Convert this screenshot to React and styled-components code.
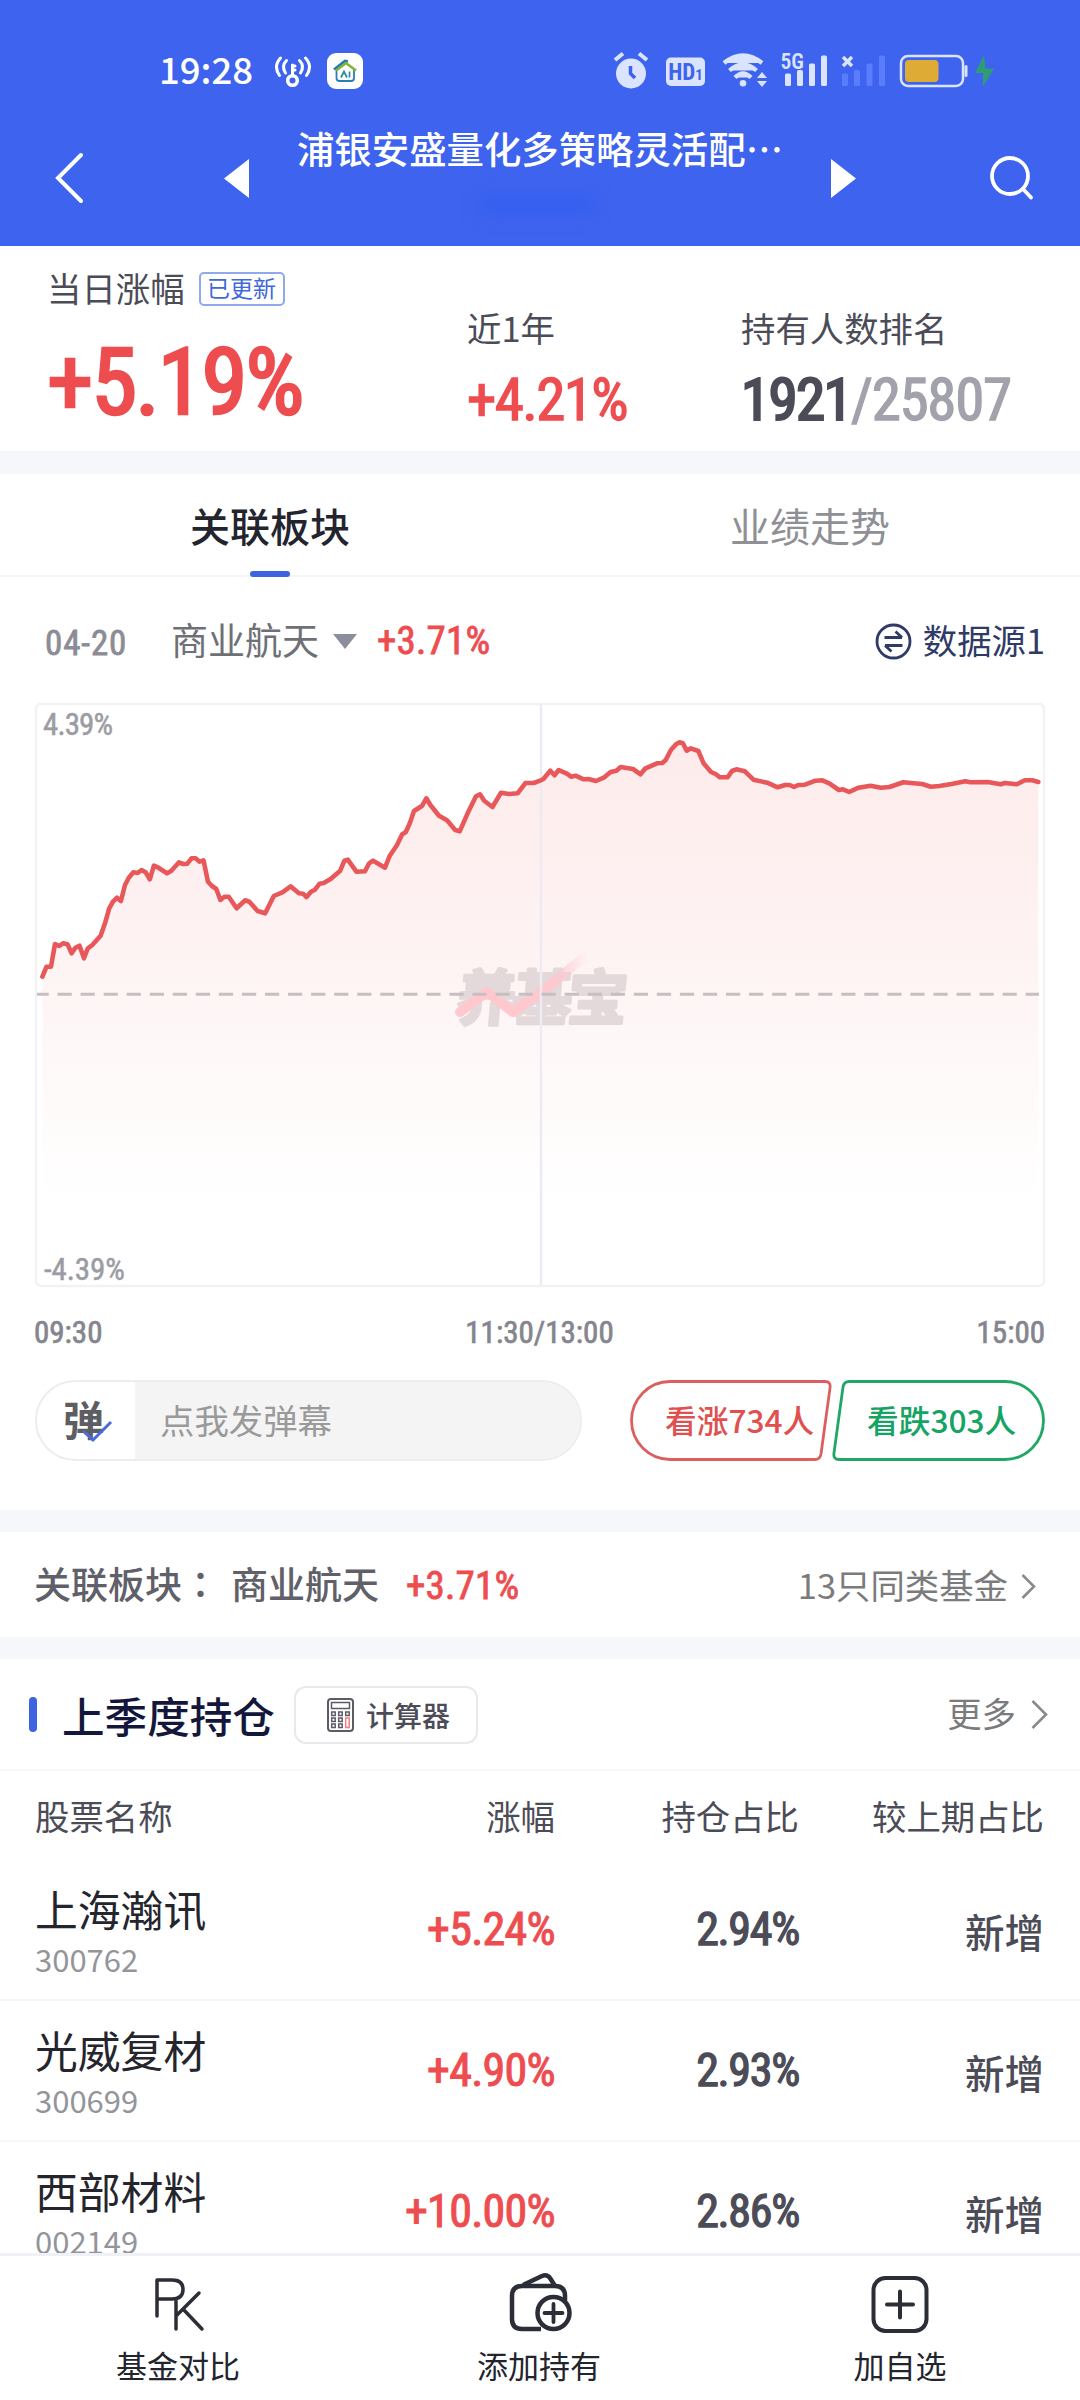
import React from 'react';
import styled, { createGlobalStyle } from 'styled-components';

const GlobalStyle = createGlobalStyle`
  body {
    margin: 0;
    background: #fff;
    font-family: "Noto Sans CJK SC", sans-serif;
  }
  * { box-sizing: border-box; }
`

const RED = '#ee4d50';
const GREEN = '#15a463';

// Base
const Screen = styled.div`
  width: 1080px;
  height: 2400px;
  display: flex;
  flex-direction: column;
  overflow: hidden;
  color: #4b4c57;
`

// the padding lifts CJK glyphs to the middle of their line
const Text = styled.span`
  font-size: ${p => p.$size || 34.4}px;
  font-weight: ${p => p.$weight || 400};
  color: ${p => p.$color || 'inherit'};
  line-height: 1;
  padding-bottom: 0.11em;
  white-space: nowrap;
`

const Colon = styled(Text)`
  font-family: "Noto Sans CJK TC", sans-serif;
  margin-right: 12px;
`

// regular weight plus a thin stroke gives a medium weight
const Num = styled.span`
  font-family: "Roboto Condensed", Roboto, "Noto Sans CJK SC", sans-serif;
  font-stretch: 75%;
  font-size: ${p => p.$size}px;
  font-weight: 400;
  -webkit-text-stroke: ${p => p.$stroke || 0.022}em currentColor;
  letter-spacing: ${p => p.$gap || 0}px;
  color: ${p => p.$color || RED};
  line-height: 1;
  white-space: nowrap;
`

const Gap = styled.div`
  flex: none;
  height: ${p => p.$h}px;
  background: #f5f7fb;
`

// Header
const Header = styled.header`
  flex: none;
  height: 246px;
  background: #3e63ee;
  color: #fff;
`

const StatusBar = styled.div`
  display: flex;
  align-items: center;
  justify-content: space-between;
  height: 142px;
  padding: 0 85px 0 159px;
`

const StatusGroup = styled.div`
  display: flex;
  align-items: center;

  svg { margin-left: ${p => p.$gap}px; }
`

const TitleBar = styled.div`
  display: flex;
  justify-content: space-between;
  height: 104px;
  padding: 0 46px 0 54px;
`

const TitleIcon = styled.svg`
  flex: none;
  margin-top: ${p => p.$top || 9}px;
`

const TitleMid = styled.div`
  display: flex;
  justify-content: space-between;
  width: 640px;
  padding-left: 6px;
`

const TitleText = styled.div`
  display: flex;
  flex-direction: column;
  align-items: center;
  margin-top: -12px;
`

const Smudge = styled.div`
  width: 120px;
  height: 22px;
  margin-top: 22px;
  margin-left: -6px;
  border-radius: 12px;
  background: #365ff0;
  filter: blur(8px);
`

// Summary
const Summary = styled.section`
  flex: none;
  display: grid;
  grid-template-columns: 420px 274px 1fr;
  height: 205px;
  padding-left: 47px;
`

const Metric = styled.div`
  display: flex;
  flex-direction: column;
  gap: ${p => p.$gap}px;
  padding-top: ${p => p.$top}px;
`

const MetricLabel = styled.div`
  display: flex;
  align-items: center;
  gap: 14px;
  height: 38px;
`

const Badge = styled.div`
  display: flex;
  align-items: center;
  justify-content: center;
  width: 86px;
  height: 34px;
  border: 2px solid #8fa9ee;
  border-radius: 5px;
  color: #3f68d8;
`

// Tabs
const Tabs = styled.nav`
  flex: none;
  display: grid;
  grid-template-columns: 1fr 1fr;
  height: 103px;
  border-bottom: 2px solid #f5f5f6;
`

const Tab = styled.div`
  position: relative;
  display: flex;
  align-items: center;
  justify-content: center;
  padding-top: 6px;

  &::after {
    content: '';
    display: ${p => p.$active ? 'block' : 'none'};
    position: absolute;
    bottom: -2px;
    left: 250px;
    width: 40px;
    height: 6px;
    border-radius: 3px;
    background: #3e63df;
  }
`

// Chart
const FilterRow = styled.div`
  flex: none;
  display: flex;
  align-items: center;
  height: 126px;
  padding: 3px 35px 0 45px;
`

const DateCell = styled.div`
  display: flex;
  width: 126px;
  padding-top: 3px;
`

const Caret = styled.div`
  margin: 0 20px 0 14px;
  border: 12.5px solid transparent;
  border-top: 15px solid #8d8e9b;
  border-bottom: 0;
`

const Source = styled.div`
  display: flex;
  align-items: center;
  gap: 11px;
  margin-left: auto;
  color: #2f3a66;
`

const ChartBox = styled.div`
  flex: none;
  height: 583px;
  margin: 0 35px;

  svg {
    display: block;
    overflow: visible;
  }
`

const Axis = styled.div`
  flex: none;
  display: grid;
  grid-template-columns: 1fr auto 1fr;
  align-items: center;
  height: 94px;
  padding: 0 35px 2px 34px;

  & > :last-child { text-align: right; }
`

const ActionRow = styled.div`
  flex: none;
  display: flex;
  justify-content: space-between;
  height: 130px;
  padding: 0 35px 0 35px;
`

const Danmu = styled.div`
  display: flex;
  width: 547px;
  height: 81px;
  border: 2px solid #ededed;
  border-radius: 41px;
  overflow: hidden;
`

const DanmuToggle = styled.div`
  position: relative;
  display: flex;
  align-items: center;
  width: 98px;
  padding-left: 26px;

  svg {
    position: absolute;
    left: 43px;
    top: 36px;
  }
`

const DanmuInput = styled.div`
  flex: 1;
  display: flex;
  align-items: center;
  padding: 2px 0 0 25px;
  background: #f4f4f4;
`

const Votes = styled.div`
  display: flex;
`

const Vote = styled.div`
  position: relative;
  display: flex;
  align-items: center;
  width: ${p => p.$w}px;
  height: 81px;
  padding-top: 2px;
  padding-left: ${p => p.$pad}px;
  color: ${p => p.$color};

  svg {
    position: absolute;
    inset: 0;
  }
`

// Sector
const SectorRow = styled.div`
  flex: none;
  display: flex;
  align-items: center;
  height: 105px;
  padding: 3px 44px 0 34px;

  ${Num} { margin-left: 27px; }
  svg { margin-left: 13px; }
`

const Push = styled.div`
  display: flex;
  align-items: center;
  margin-left: auto;
`

// Holdings
const HoldHead = styled.div`
  flex: none;
  display: flex;
  align-items: center;
  height: 112px;
  padding: 1px 32px 0 29px;
  border-bottom: 2px solid #f8f8f9;

  ${Push} svg { margin-left: 15px; }
`

const HoldTitle = styled.div`
  display: flex;
  padding-top: 6px;
`

const Bar = styled.div`
  width: 8px;
  height: 35px;
  margin-right: 25px;
  border-radius: 4px;
  background: #3e63df;
`

const CalcButton = styled.div`
  display: flex;
  align-items: center;
  gap: 12px;
  width: 184px;
  height: 58px;
  margin-left: 19px;
  padding-left: 31px;
  border: 2px solid #e9e9eb;
  border-radius: 12px;

  ${Text} { margin-top: 4px; }
`

const Table = styled.div`
  flex: 1;
  min-height: 0;
  overflow: hidden;
`

const Row = styled.div`
  display: grid;
  grid-template-columns: 300px 220px 244px 245px;
  align-items: center;
  height: ${p => p.$head ? 89 : 141}px;
  padding: ${p => p.$head ? 4 : 0}px 36px 0 35px;
  border-bottom: ${p => p.$head ? 0 : 2}px solid #f7f7f8;
`

const Cell = styled.div`
  display: flex;
  justify-content: flex-end;
  padding-top: ${p => p.$top || 0}px;
  padding-bottom: ${p => p.$bottom || 0}px;
`

const Stock = styled.div`
  display: flex;
  flex-direction: column;
  gap: 9px;
  padding-top: 5px;
`

// Bottom bar
const BottomBar = styled.footer`
  flex: none;
  display: grid;
  grid-template-columns: repeat(3, 361px);
  justify-content: center;
  height: 147px;
  padding-right: 2px;
  border-top: 3px solid #f0f1f7;
`

const BottomItem = styled.div`
  display: flex;
  flex-direction: column;
  align-items: center;
  gap: 12px;
  padding-top: 15px;
  color: #22242e;
`

// Data
const points = '6.4,273.7 10.5,263.7 15,263.7 19,241 23.2,243 27,240.3 31.5,241.3 35.6,250.3 39.4,244.7 43.5,242.7 48,255.3 51.8,245.3 56.3,242 64.6,232.7 69,220.3 73.2,205.3 77,198.7 81,194.7 84.9,198 89,182 92.8,174.7 97.3,169.3 101.7,170 105.5,167 109.7,169.3 113.8,176.3 117.9,162.7 122.4,164.7 131,170.3 135.1,168 143,159.3 147.2,161 151.3,160.7 155.5,155.3 159.6,155.3 163.7,158.7 167.5,157.3 172,178.7 176,183 180.3,186 184.4,197 188.5,193.7 192.7,193.7 200.6,205.3 209.2,197.3 213.3,198.7 221.6,208 229.2,210.3 237.8,193 246.4,189.3 254.6,183.3 262.9,190.3 267,190.7 270.5,194 275,188.7 279,186.7 283.6,180.7 287.7,180 294.6,176 304.2,167.7 308.4,157.7 311.8,156.7 320.4,168.7 329,168.3 333.1,160.3 337,157.7 341,160 349,164.7 353.8,152.7 361,142 366.2,131.3 369.7,129.3 373.8,120.3 378,108 386.2,102.7 390.3,95.3 394.4,102 403,112.7 411,117.3 419.2,127 423.7,128.3 431.6,110.3 440,93.3 444,91.3 448.2,97.7 456.4,104 465,89.7 473,91 481.6,90.3 489.5,80 497.8,80 504,77.7 507.4,76 514.3,67.7 518.5,72.3 522.6,67 530.9,70.7 535,73.7 539.5,72.7 547.7,76.3 552.2,76 560,78 567.7,74.7 574.6,69 580.4,67.7 584.6,64 597,66 604.5,71.3 609,65.7 621,60.3 626.2,60 629.7,57 634.9,47 640,41.3 643.5,39.3 646.9,40.3 650.7,47.7 654.8,45.3 662.4,48 667.6,60.3 675,69 679.6,71 684,74.3 691.7,74.3 696,68 700.3,66.3 708.9,68.3 717.5,76.7 731.3,79.7 741.6,84.3 749.2,82 753.7,82 758,84 762.3,82 769,81.7 779.5,77.7 786.4,77.3 793.3,80.3 802.9,87 807,86.3 813.2,89 822.5,84.7 834.6,82.7 844.9,84.7 853.5,84 867.3,79.3 886.2,81 894.8,83.7 903.4,83 915.5,81 929.3,78.3 934.4,79.3 951.7,79 964.7,81.3 968.9,80 980.9,81.3 988.8,77.3 996.4,77.3 1002.3,79';

const stocks = [
  { name: '上海瀚讯', code: '300762', change: '+5.24%', share: '2.94%' },
  { name: '光威复材', code: '300699', change: '+4.90%', share: '2.93%' },
  { name: '西部材料', code: '002149', change: '+10.00%', share: '2.86%' },
]

// Icons
const HotspotIcon = () => (
  <svg width="38" height="34" viewBox="0 0 38 34" fill="none" stroke="#fff" strokeWidth="3" strokeLinecap="round">
    <path d="M6.500 4 Q-1 12 5.500 21.500" />
    <path d="M12.500 6.500 Q7 12 11.500 19" />
    <path d="M31.500 4 Q39 12 32.500 21.500" />
    <path d="M25.500 6.500 Q31 12 26.500 19" />
    <circle cx="18.500" cy="26.500" r="4.800" strokeWidth="3.500" />
    <path d="M18.500 21 V11 M18.500 12 H21 M18.500 16 H21" />
  </svg>
)

const HomeAppIcon = () => (
  <svg width="36" height="36" viewBox="0 0 36 36" fill="none">
    <rect width="36" height="36" rx="9" fill="#fff" />
    <path d="M9.500 17 V25 Q9.500 28 12.500 28 H24 Q27 28 27 25 V17" stroke="#2a7fb0" strokeWidth="1.800" />
    <path d="M7 16.500 L18 8 L21 8.500" stroke="#2179b8" strokeWidth="2.600" />
    <path d="M9 17.500 L19 10 L29 17.500" stroke="#7db538" strokeWidth="2.600" />
    <path d="M14 24.500 L17 18.500 L20 24.500 M22.500 18.500 V24.500" stroke="#2a8a9c" strokeWidth="1.700" />
  </svg>
)

const StatusIcons = () => (
  <svg width="382" height="40" viewBox="0 0 382 40" fill="none">
    <g fill="#dbe4ff">
      <circle cx="18" cy="22.500" r="15" />
      <path d="M2 9 L10 2.500 M34 9 L26 2.500" stroke="#dbe4ff" strokeWidth="4" />
      <path d="M17.500 15 V22.500 L22 27" stroke="#3e63ee" strokeWidth="3.500" />
      <rect x="53" y="6.500" width="39" height="28.500" rx="5" />
      <path d="M111 12 Q130 -3 149 12" stroke="#dbe4ff" strokeWidth="4.500" />
      <path d="M116.500 19.500 Q130 7.500 143.500 19.500" stroke="#dbe4ff" strokeWidth="4.300" />
      <path d="M122 26.500 Q130 18.500 138 26.500" stroke="#dbe4ff" strokeWidth="4.300" />
      <circle cx="130" cy="32.300" r="3.300" />
      <path d="M149 21 L154 27 H144 Z M149 36 L154 30 H144 Z" />
      <rect x="172" y="22.500" width="6" height="12.500" rx="1.500" />
      <rect x="184" y="19" width="6" height="16" rx="1.500" />
      <rect x="196" y="12.500" width="6" height="22.500" rx="1.500" />
      <rect x="208" y="4.500" width="6" height="30.500" rx="1.500" />
    </g>
    <g fill="#5c7cff">
      <rect x="229" y="22.500" width="6" height="12.500" rx="1.500" />
      <rect x="241" y="19" width="6" height="16" rx="1.500" />
      <rect x="253.500" y="12.500" width="6" height="22.500" rx="1.500" />
      <rect x="266" y="4.500" width="6" height="30.500" rx="1.500" />
    </g>
    <path d="M230 6 L239 15 M239 6 L230 15" stroke="#dbe4ff" strokeWidth="3.500" />
    <text x="72.500" y="28.500" textAnchor="middle" fontFamily="Roboto Condensed, sans-serif" fontWeight="700" fontSize="23" fill="#3e63ee">
      HD<tspan fontSize="15">1</tspan>
    </text>
    <text x="167.500" y="18" fontFamily="Roboto Condensed, sans-serif" fontWeight="600" fontSize="21.500" fill="#dbe4ff">5G</text>
    <rect x="288" y="5" width="62" height="30" rx="7" stroke="#dbe4ff" strokeWidth="2.500" />
    <rect x="292" y="9" width="33.500" height="22" rx="4" fill="#deab35" />
    <rect x="351.500" y="14" width="3" height="12" rx="1.500" fill="#dbe4ff" />
    <path d="M371 4 L362 22 H370 L370 36 L381 17.500 H372.500 Z" fill="#2e9c74" />
  </svg>
)

const Chevron = ({ w, h, color }) => (
  <svg width={w} height={h} viewBox={`0 0 ${w} ${h}`} fill="none" stroke={color} strokeWidth="2.600">
    <path d={`M1.500 1 L${w - 2} ${h / 2} L1.500 ${h - 1}`} />
  </svg>
)

const SwapIcon = () => (
  <svg width="37" height="37" viewBox="0 0 37 37" fill="none" stroke="#2f3a66" strokeWidth="2.800">
    <circle cx="18.500" cy="18.500" r="16.500" />
    <path d="M9.500 14.500 H27 M20.500 8.500 L27 14.500 M27.500 22.500 H10 M16.500 28.500 L10 22.500" />
  </svg>
)

const CalcIcon = () => (
  <svg width="27" height="34" viewBox="0 0 27 34" fill="none" stroke="#5a5b66" strokeWidth="1.500">
    <rect x="1" y="1" width="25" height="32" rx="3" strokeWidth="2" />
    <rect x="4.500" y="4.500" width="18" height="6" />
    <rect x="4.700" y="14" width="3.500" height="3.500" />
    <rect x="11.700" y="14" width="3.500" height="3.500" />
    <rect x="18.700" y="14" width="3.500" height="3.500" />
    <rect x="4.700" y="20" width="3.500" height="3.500" />
    <rect x="11.700" y="20" width="3.500" height="3.500" />
    <rect x="4.700" y="26" width="3.500" height="3.500" />
    <rect x="11.700" y="26" width="3.500" height="3.500" />
    <rect x="18.700" y="20" width="3.500" height="9.500" stroke="#f08080" />
  </svg>
)

const PkIcon = () => (
  <svg width="60" height="66" viewBox="0 0 60 66" fill="none" stroke="#2b2d37" strokeWidth="3.500" strokeLinecap="round" strokeLinejoin="round">
    <path d="M9 45 V9 H24 Q35 9 35 18.500 Q35 28 24 28 H10" />
    <path d="M28 30 V58 M51 22 L29 44 M35 38 L54 58" />
  </svg>
)

const WalletIcon = () => (
  <svg width="66" height="66" viewBox="0 0 66 66" fill="none" stroke="#2b2d37" strokeWidth="4.500" strokeLinejoin="round">
    <path d="M35 58 H16 Q6 58 6 48 V25 Q6 15 16 15 H49 Q59 15 59 25 V30" />
    <path d="M17 14 L36 5 Q41 3 44 7 L49 15" />
    <circle cx="47.500" cy="42" r="16" />
    <path d="M47.500 33 V51 M38.500 42 H56.500" strokeWidth="3.800" strokeLinecap="round" />
  </svg>
)

const PlusIcon = () => (
  <svg width="66" height="66" viewBox="0 0 66 66" fill="none" stroke="#2b2d37" strokeWidth="4" strokeLinecap="round">
    <rect x="6.500" y="7" width="53" height="53" rx="12" />
    <path d="M33 20.500 V46.500 M20 33.500 H46" />
  </svg>
)

const Chart = () => (
  <svg width="1010" height="583" viewBox="-1 0 1010 583" fill="none">
    <defs>
      <linearGradient id="area" gradientUnits="userSpaceOnUse" x1="0" y1="39" x2="0" y2="500">
        <stop offset="0" stopColor="#fdebeb" />
        <stop offset="0.300" stopColor="#fef0f0" />
        <stop offset="0.600" stopColor="#fef6f6" />
        <stop offset="1" stopColor="#ffffff" />
      </linearGradient>
      <linearGradient id="streak" gradientUnits="userSpaceOnUse" x1="515" y1="0" x2="552" y2="0">
        <stop offset="0" stopColor="#ffc8cf" />
        <stop offset="1" stopColor="#ffc8cf" stopOpacity="0" />
      </linearGradient>
    </defs>
    <path d={`M6.400 560 L${points} L1002.300 560 Z`} fill="url(#area)" />
    <rect x="0" y="1" width="1008" height="582" rx="5" stroke="#f2f2f5" strokeWidth="2.500" />
    <g transform="translate(0 317) skewX(-5)">
      <text
        x="419"
        y="0"
        fontFamily="Noto Sans CJK SC"
        fontWeight="700"
        fontSize="60"
        letterSpacing="-4.500"
        fill="#e3d9da"
        stroke="#e3d9da"
        strokeWidth="3"
        strokeLinejoin="round"
      >养基宝</text>
    </g>
    <path d="M424 309 L451 289 L477 309 L512 284 L552 251" stroke="url(#streak)" strokeWidth="10" strokeLinecap="round" strokeLinejoin="round" />
    <path d="M505 1 V582" stroke="#eeeaf4" strokeWidth="2.500" />
    <path d="M1 291.300 H1003" stroke="#c6bfc2" strokeWidth="3" strokeDasharray="14.200 8.850" strokeDashoffset="2.500" />
    <polyline points={points} stroke="#e8585a" strokeWidth="4.600" strokeLinejoin="round" strokeLinecap="round" />
    <g fontFamily="Roboto Condensed, sans-serif" fontSize="31" fill="#9b9ca4" stroke="#9b9ca4" strokeWidth="0.500">
      <text x="7" y="32" letterSpacing="-0.900">4.39%</text>
      <text x="8" y="577" letterSpacing="-0.100">-4.39%</text>
    </g>
  </svg>
)

const App = () => {

  return (
    <Screen>
      <GlobalStyle />

      <Header>
        <StatusBar>
          <StatusGroup $gap={0}>
            <Text $size={36.5} $weight={500}>19:28</Text>
            <StatusGroup $gap={21}><HotspotIcon /></StatusGroup>
            <StatusGroup $gap={15}><HomeAppIcon /></StatusGroup>
          </StatusGroup>
          <StatusIcons />
        </StatusBar>
        <TitleBar>
          <TitleIcon width="32" height="54" viewBox="0 0 32 54" fill="none" stroke="#fff" strokeWidth="4" strokeLinecap="round">
            <path d="M27 4 L4 27 L27 50" />
          </TitleIcon>
          <TitleMid>
            <TitleIcon $top={17} width="27" height="40" viewBox="0 0 27 40" fill="#fff">
              <path d="M26 0 V39 L1 19.500 Z" />
            </TitleIcon>
            <TitleText>
              <Text $size={37.4} $weight={500}>浦银安盛量化多策略灵活配⋯</Text>
              <Smudge />
            </TitleText>
            <TitleIcon $top={17} width="27" height="40" viewBox="0 0 27 40" fill="#fff">
              <path d="M1 0 V39 L26 19.500 Z" />
            </TitleIcon>
          </TitleMid>
          <TitleIcon $top={12} width="46" height="48" viewBox="0 0 46 48" fill="none" stroke="#fff" strokeWidth="3.800" strokeLinecap="round">
            <circle cx="22" cy="22" r="18" />
            <path d="M35 35 L43 43.500" />
          </TitleIcon>
        </TitleBar>
      </Header>

      <Summary>
        <Metric $top={24} $gap={28}>
          <MetricLabel>
            <Text>当日涨幅</Text>
            <Badge><Text $size={23}>已更新</Text></Badge>
          </MetricLabel>
          <Num $size={93} $gap={-2} $stroke={0.028}>+5.19%</Num>
        </Metric>
        <Metric $top={64} $gap={22}>
          <MetricLabel><Text>近1年</Text></MetricLabel>
          <Num $size={59} $gap={-1.6}>+4.21%</Num>
        </Metric>
        <Metric $top={64} $gap={22}>
          <MetricLabel><Text>持有人数排名</Text></MetricLabel>
          <div>
            <Num $size={59} $gap={-1.6} $stroke={0.038} $color='#4b4c57'>1921</Num>
            <Num $size={59} $gap={-1.3} $color='#a1a2ab'>/25807</Num>
          </div>
        </Metric>
      </Summary>
      <Gap $h={23} />

      <Tabs>
        <Tab $active><Text $size={40} $weight={500} $color='#23242e'>关联板块</Text></Tab>
        <Tab><Text $size={40} $color='#8f9096'>业绩走势</Text></Tab>
      </Tabs>

      <FilterRow>
        <DateCell><Num $size={35} $gap={0.9} $color='#8b8c95'>04-20</Num></DateCell>
        <Text $size={37} $color='#6f7076'>商业航天</Text>
        <Caret />
        <Num $size={39} $gap={0.2}>+3.71%</Num>
        <Source>
          <SwapIcon />
          <Text>数据源1</Text>
        </Source>
      </FilterRow>

      <ChartBox><Chart /></ChartBox>

      <Axis>
        <Num $size={31} $color='#84858e'>09:30</Num>
        <Num $size={31} $color='#84858e'>11:30/13:00</Num>
        <Num $size={31} $color='#84858e'>15:00</Num>
      </Axis>

      <ActionRow>
        <Danmu>
          <DanmuToggle>
            <Text $size={41} $weight={700} $color='#5d5e63'>弹</Text>
            <svg width="34" height="26" viewBox="0 0 34 26" fill="none" stroke="#4a6ad8" strokeWidth="3">
              <path d="M3 13 L13 22 L31 4" />
            </svg>
          </DanmuToggle>
          <DanmuInput><Text $color='#9a9a9a'>点我发弹幕</Text></DanmuInput>
        </Danmu>
        <Votes>
          <Vote $w={202} $pad={35} $color='#e0504f'>
            <svg width="202" height="81" viewBox="0 0 202 80" preserveAspectRatio="none" fill="none" stroke="#dc5f5f" strokeWidth="2.800">
              <path d="M40 1.500 H195 Q201 1.500 200 8 L191 73 Q190 78.500 185 78.500 H40 A38.500 38.500 0 0 1 40 1.500 Z" />
            </svg>
            <Text $size={31.7} $weight={500}>看涨734人</Text>
          </Vote>
          <Vote $w={213} $pad={35} $color={GREEN}>
            <svg width="213" height="81" viewBox="0 0 213 80" preserveAspectRatio="none" fill="none" stroke="#1fa766" strokeWidth="2.800">
              <path d="M173 1.500 H17 Q12 1.500 11 7 L2 72 Q1 78.500 7 78.500 H173 A38.500 38.500 0 0 0 173 1.500 Z" />
            </svg>
            <Text $size={31.7} $weight={500}>看跌303人</Text>
          </Vote>
        </Votes>
      </ActionRow>
      <Gap $h={22} />

      <SectorRow>
        <Text $size={37} $weight={500} $color='#5f6069'>关联板块</Text>
        <Colon $size={37} $weight={500} $color='#5f6069'>：</Colon>
        <Text $size={37} $weight={500} $color='#5f6069'>商业航天</Text>
        <Num $size={39} $gap={0.2}>+3.71%</Num>
        <Push>
          <Text $color='#7b7b7d'>13只同类基金</Text>
          <Chevron w={15} h={25} color='#8a8a8c' />
        </Push>
      </SectorRow>
      <Gap $h={22} />

      <HoldHead>
        <Bar />
        <HoldTitle><Text $size={42.6} $weight={500} $color='#14173c'>上季度持仓</Text></HoldTitle>
        <CalcButton>
          <CalcIcon />
          <Text $size={28} $weight={500}>计算器</Text>
        </CalcButton>
        <Push>
          <Text $color='#7b7b7d'>更多</Text>
          <Chevron w={17} h={29} color='#8a8a8c' />
        </Push>
      </HoldHead>

      <Table>
        <Row $head>
          <Text>股票名称</Text>
          <Cell><Text>涨幅</Text></Cell>
          <Cell><Text>持仓占比</Text></Cell>
          <Cell><Text>较上期占比</Text></Cell>
        </Row>
        {stocks.map(s => (
          <Row key={s.code}>
            <Stock>
              <Text $size={42.8} $color='#24252d'>{s.name}</Text>
              <Text $size={31} $color='#94959b'>{s.code}</Text>
            </Stock>
            <Cell $bottom={2}><Num $size={46} $gap={-0.7}>{s.change}</Num></Cell>
            <Cell $bottom={2}><Num $size={46} $gap={-1.3} $stroke={0.028} $color='#4b4c57'>{s.share}</Num></Cell>
            <Cell $top={6}><Text $size={39.5} $weight={500}>新增</Text></Cell>
          </Row>
        ))}
      </Table>

      <BottomBar>
        <BottomItem>
          <PkIcon />
          <Text $size={31}>基金对比</Text>
        </BottomItem>
        <BottomItem>
          <WalletIcon />
          <Text $size={31}>添加持有</Text>
        </BottomItem>
        <BottomItem>
          <PlusIcon />
          <Text $size={31}>加自选</Text>
        </BottomItem>
      </BottomBar>
    </Screen>
  )

}

export default App;
